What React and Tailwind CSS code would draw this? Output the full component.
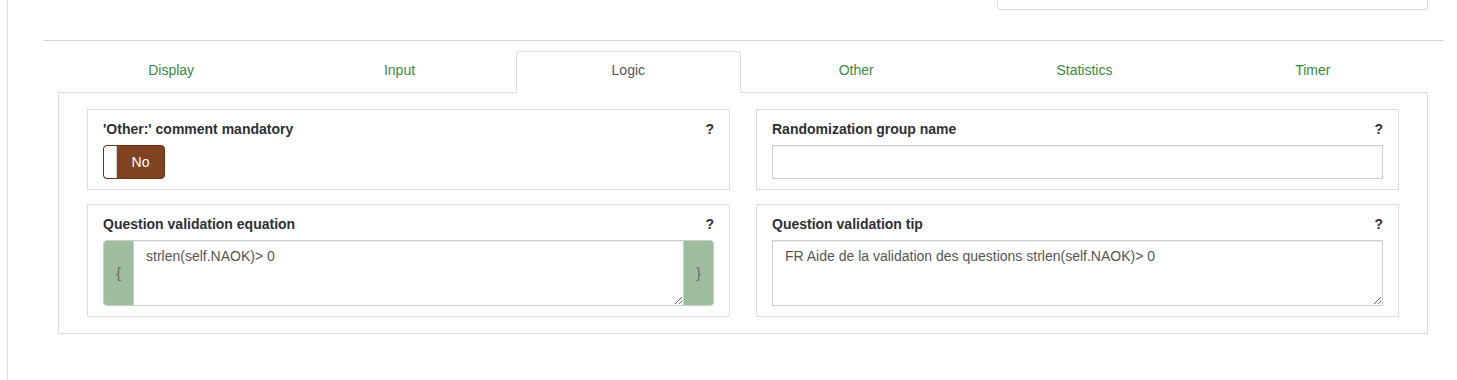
import React from "react";

const tabs = ["Display", "Input", "Logic", "Other", "Statistics", "Timer"];

function Help() {
  return <span className="text-[14px] font-bold text-[#2d3036] leading-[20px]">?</span>;
}

function Label({ children }) {
  return (
    <div className="flex justify-between items-center mb-[6px] h-[20px]">
      <span className="text-[14px] font-bold text-[#2d3036] leading-[20px]">{children}</span>
      <Help />
    </div>
  );
}

export default function App() {
  return (
    <div className="min-h-[380px] bg-white font-['Liberation_Sans',Arial,sans-serif]">
      <div className="ml-[7px] min-h-[380px] border-l border-[#dddddd] overflow-hidden">
        <div className="flex justify-end">
          <div className="w-[431px] h-[10px] mr-[29px] border border-t-0 border-[#dddddd] rounded-b-[4px] shadow-[0_1px_1px_rgba(0,0,0,0.04)]" />
        </div>
        <div className="mt-[30px] ml-[35px] mr-[14px] border-t border-[#d6d6d6]" />
        <div className="mt-[10px] ml-[50px] mr-[29px]">
          <div className="flex items-end -ml-px mr-px">
            {tabs.map((t) => (
              <div key={t} className="flex-1 min-w-0">
                {t === "Logic" ? (
                  <div className="ml-[2px] mr-[1px] relative z-10 -mb-px h-[42px] pb-[3px] bg-white border border-[#dddddd] border-b-white rounded-t-[4px] flex items-center justify-center text-[14px] text-[#555555]">
                    {t}
                  </div>
                ) : (
                  <div className="h-[41px] pb-[2px] flex items-center justify-center text-[14px] text-[#3a8a3d]">
                    {t}
                  </div>
                )}
              </div>
            ))}
          </div>
          <div className="border border-[#dddddd] px-[28px] pt-[16px] pb-[16px] grid grid-cols-2 gap-x-[26px] gap-y-[14px]">
            <div className="border border-[#dddddd] px-[15px] pt-[9px] pb-[10px]">
              <Label>'Other:' comment mandatory</Label>
              <div className="w-[62px] h-[34px] rounded-[4px] border border-[#6a3214] bg-[#7f4321] flex overflow-hidden">
                <div className="w-[13px] h-full bg-white rounded-l-[3px] border-r border-[#ccc]" />
                <div className="flex-1 flex items-center justify-center text-[14px] text-white">No</div>
              </div>
            </div>
            <div className="border border-[#dddddd] px-[15px] pt-[9px] pb-[10px]">
              <Label>Randomization group name</Label>
              <input readOnly className="block w-full h-[34px] border border-[#cccccc] shadow-[inset_0_1px_1px_rgba(0,0,0,0.075)] outline-none" />
            </div>
            <div className="border border-[#dddddd] px-[15px] pt-[9px] pb-[10px]">
              <Label>Question validation equation</Label>
              <div className="flex h-[66px]">
                <div className="w-[31px] bg-[#9dbd9e] border border-[#cccccc] rounded-l-[4px] flex items-center justify-center text-[14px] text-[#666666]">{"{"}</div>
                <textarea
                  readOnly
                  value="strlen(self.NAOK)> 0"
                  className="flex-1 min-w-0 h-full border-y border-[#cccccc] px-[12px] pt-[5px] text-[14px] leading-[20px] text-[#555555] outline-none resize-y shadow-[inset_0_1px_1px_rgba(0,0,0,0.075)] font-['Liberation_Sans',Arial,sans-serif]"
                />
                <div className="w-[31px] bg-[#9dbd9e] border border-[#cccccc] rounded-r-[4px] flex items-center justify-center text-[14px] text-[#666666]">{"}"}</div>
              </div>
            </div>
            <div className="border border-[#dddddd] px-[15px] pt-[9px] pb-[10px]">
              <Label>Question validation tip</Label>
              <textarea
                readOnly
                value="FR Aide de la validation des questions strlen(self.NAOK)> 0"
                className="block w-full h-[66px] border border-[#cccccc] px-[12px] pt-[5px] text-[14px] leading-[20px] text-[#555555] outline-none resize-y shadow-[inset_0_1px_1px_rgba(0,0,0,0.075)] font-['Liberation_Sans',Arial,sans-serif]"
              />
            </div>
          </div>
        </div>
      </div>
    </div>
  );
}
